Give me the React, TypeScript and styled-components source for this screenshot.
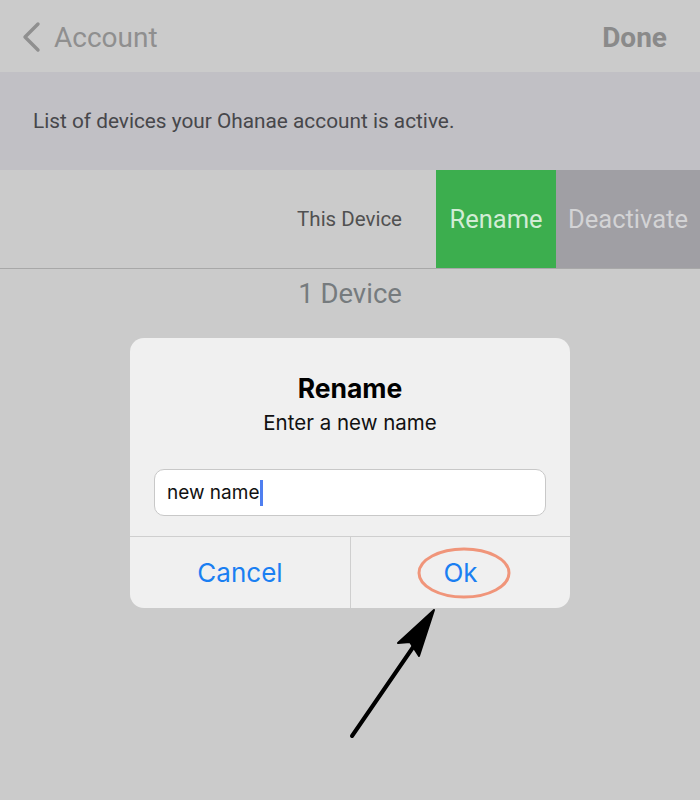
import React from "react";
import styled, { createGlobalStyle } from "styled-components";

const Global = createGlobalStyle`
  html, body { margin: 0; padding: 0; }
  body { width: 700px; height: 800px; overflow: hidden; background: #cbcbcb; font-family: Roboto, "Liberation Sans", sans-serif; }
`;

const Screen = styled.div`
  position: relative;
  width: 700px;
  height: 800px;
  background: #cbcbcb;
  display: flex;
  flex-direction: column;
`;

const NavBar = styled.div`
  height: 72px;
  display: flex;
  align-items: center;
  justify-content: space-between;
  padding: 2px 33px 0 20px;
  box-sizing: border-box;
`;

const BackLink = styled.div`
  display: flex;
  align-items: center;
  gap: 12px;
  color: #8f8f8f;
  font-size: 28px;
`;

const DoneLabel = styled.div`
  color: #8a8a8a;
  font-size: 28px;
  font-weight: 700;
`;

const InfoBand = styled.div`
  height: 98px;
  background: #c1c0c5;
  display: flex;
  align-items: center;
  padding-left: 33px;
  color: #47474b;
  font-size: 20.8px;
`;

const DeviceRow = styled.div`
  height: 98px;
  display: flex;
  align-items: stretch;
  justify-content: flex-end;
  border-bottom: 1px solid #a8a8a8;
`;

const RowLabel = styled.div`
  display: flex;
  align-items: center;
  padding-right: 34px;
  color: #515151;
  font-size: 20.5px;
`;

const SwipeAction = styled.div<{ $bg: string; $fg: string; $w: number }>`
  width: ${(p) => p.$w}px;
  background: ${(p) => p.$bg};
  color: ${(p) => p.$fg};
  display: flex;
  align-items: center;
  justify-content: center;
  font-size: 25.5px;
`;

const CountLabel = styled.div`
  text-align: center;
  color: #767b7e;
  font-size: 27.5px;
  padding-top: 8px;
`;

const Dialog = styled.div`
  position: absolute;
  left: 130px;
  top: 338px;
  width: 440px;
  height: 270px;
  background: #f0f0f0;
  border-radius: 14px;
  display: flex;
  flex-direction: column;
  font-family: Inter, "Liberation Sans", sans-serif;
`;

const DialogBody = styled.div`
  flex: 1;
  display: flex;
  flex-direction: column;
  align-items: center;
  padding: 33px 24px 0;
`;

const DialogTitle = styled.div`
  font-size: 26.5px;
  font-weight: 700;
  color: #000;
  line-height: 34px;
`;

const DialogSub = styled.div`
  font-size: 20.5px;
  color: #111;
  line-height: 28px;
  margin-top: 4px;
`;

const InputBox = styled.div`
  margin-top: 32px;
  width: 392px;
  height: 47px;
  box-sizing: border-box;
  background: #fff;
  border: 1px solid #c8c8c8;
  border-radius: 10px;
  display: flex;
  align-items: center;
  padding-left: 12px;
  font-size: 19px;
  color: #111;
`;

const Caret = styled.span`
  display: inline-block;
  width: 3px;
  height: 26px;
  background: #4f7ff0;
  margin-left: 1px;
`;

const ButtonBar = styled.div`
  height: 71px;
  border-top: 1px solid #cfcfcf;
  display: grid;
  grid-template-columns: 1fr 1fr;
`;

const DialogButton = styled.div<{ $divider?: boolean }>`
  position: relative;
  display: flex;
  align-items: center;
  justify-content: center;
  color: #1a7ff2;
  font-size: 26px;
  border-left: ${(p) => (p.$divider ? "1px solid #cfcfcf" : "none")};
`;

const Highlight = styled.svg`
  position: absolute;
  left: 65px;
  top: 9px;
`;

const Arrow = styled.svg`
  position: absolute;
  left: 0;
  top: 0;
  pointer-events: none;
`;

export default function App() {
  return (
    <Screen>
      <Global />
      <NavBar>
        <BackLink>
          <svg width="22" height="32" viewBox="0 0 22 32">
            <path d="M18 3 L5 16 L18 29" fill="none" stroke="#8f8f8f" strokeWidth="3.4" strokeLinecap="round" strokeLinejoin="round" />
          </svg>
          Account
        </BackLink>
        <DoneLabel>Done</DoneLabel>
      </NavBar>
      <InfoBand>List of devices your Ohanae account is active.</InfoBand>
      <DeviceRow>
        <RowLabel>This Device</RowLabel>
        <SwipeAction $bg="#3cae4e" $fg="#d2ecd5" $w={120}>Rename</SwipeAction>
        <SwipeAction $bg="#a09fa4" $fg="#d3d3d5" $w={144}>Deactivate</SwipeAction>
      </DeviceRow>
      <CountLabel>1 Device</CountLabel>
      <Dialog>
        <DialogBody>
          <DialogTitle>Rename</DialogTitle>
          <DialogSub>Enter a new name</DialogSub>
          <InputBox>
            new name<Caret />
          </InputBox>
        </DialogBody>
        <ButtonBar>
          <DialogButton>Cancel</DialogButton>
          <DialogButton $divider>
            Ok
            <Highlight width="96" height="54" viewBox="0 0 96 54">
              <ellipse cx="48" cy="27" rx="45" ry="24" fill="none" stroke="#f0957a" strokeWidth="3" />
            </Highlight>
          </DialogButton>
        </ButtonBar>
      </Dialog>
      <Arrow width="700" height="800" viewBox="0 0 700 800">
        <line x1="352" y1="736" x2="418" y2="640" stroke="#000" strokeWidth="4" strokeLinecap="round" />
        <path d="M434 610 L398 643 L410 642 L419 656 Z" fill="#000" stroke="#000" strokeWidth="2" strokeLinejoin="round" />
      </Arrow>
    </Screen>
  );
}
